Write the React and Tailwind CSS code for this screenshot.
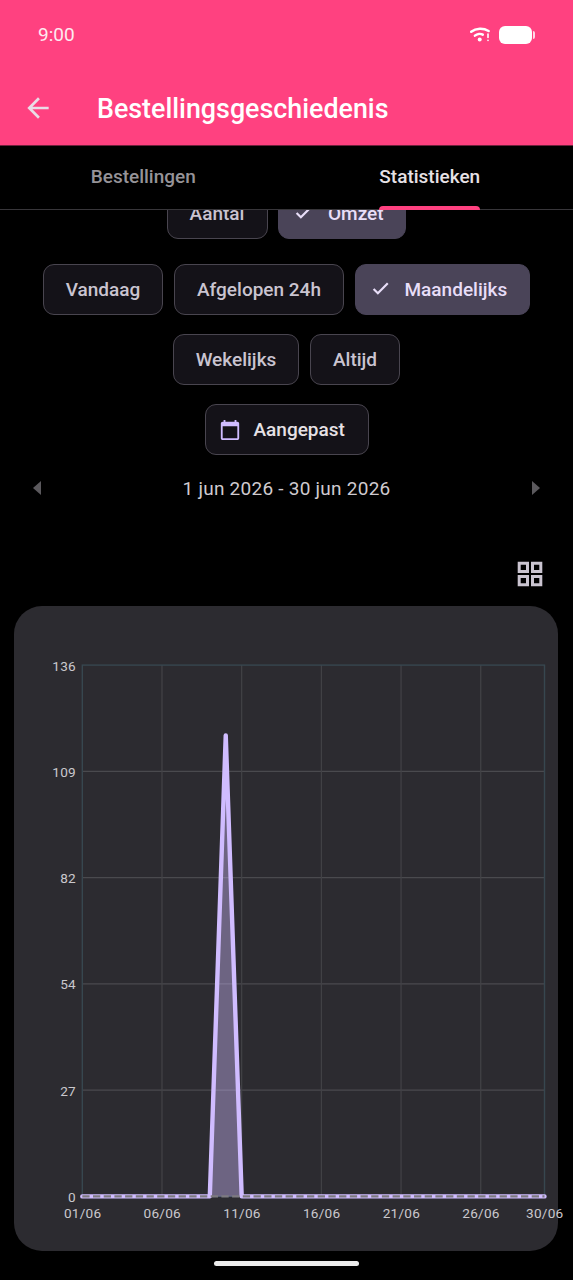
import clsx from "clsx";

function Chip({ label, selected, icon, className = "" }) {
  return (
    <div
      className={clsx(
        "flex h-[51px] shrink-0 items-center rounded-[11px] border text-[19px] font-medium",
        selected
          ? "border-[#4a4458] bg-[#4a4458] text-[#e8def8]"
          : "border-[#49454f] bg-[#141218] text-[#cac4d0]",
        className
      )}
    >
      {icon}
      <span className="pt-[2px] whitespace-nowrap">{label}</span>
    </div>
  );
}

function CheckMark() {
  return (
    <svg viewBox="0 0 24 24" className="mr-[14px] mb-[2px] size-[21px] shrink-0" fill="none" stroke="#e8def8" strokeWidth="2.5">
      <path d="M4.1 12.500 9 17.400 20.300 6.100" />
    </svg>
  );
}

const left = 68.3;
const right = 530.5;
const top = 59.1;
const bottom = 590.4;
const dayX = (day) => left + ((right - left) / 29) * (day - 1);

const yTicks = [136, 109, 82, 54, 27, 0].map((label, i) => ({
  label,
  y: top + ((bottom - top) / 5) * i,
}));
const xTicks = [1, 6, 11, 16, 21, 26, 30];
const amounts = Array.from({ length: 30 }, (_, i) => (i === 9 ? 118 : 0));
const line = amounts
  .map((a, i) => `${i ? "L" : "M"}${dayX(i + 1)} ${bottom - (a / 136) * (bottom - top)}`)
  .join(" ");

function RevenueChart() {
  return (
    <svg viewBox="0 0 544 645" className="h-[645px] w-[544px] overflow-visible">
      {yTicks.slice(1, 5).map((t) => (
        <line key={t.label} x1={left} x2={right} y1={t.y} y2={t.y} stroke="#4a4a4e" strokeWidth="1.2" />
      ))}
      {xTicks.slice(1, 6).map((d) => (
        <line key={d} x1={dayX(d)} x2={dayX(d)} y1={top} y2={bottom} stroke="#434347" strokeWidth="1.2" />
      ))}
      <rect x={left} y={top} width={right - left} height={bottom - top} fill="none" stroke="#37474f" strokeWidth="1.4" />
      <path d={`${line} Z`} fill="#d0bcff" fillOpacity="0.4" />
      <path d={line} fill="none" stroke="#d0bcff" strokeWidth="4.4" strokeLinecap="round" strokeLinejoin="round" />
      <line x1={left} x2={right} y1={bottom} y2={bottom} stroke="#7d7a80" strokeWidth="2.4" strokeDasharray="7.3 3.4" />
      <g fill="#cac8cd" fontSize="13.6" letterSpacing="0.25">
        {yTicks.map((t) => (
          <text key={t.label} x="62" y={t.y + 5.6} textAnchor="end">
            {t.label}
          </text>
        ))}
        {xTicks.map((d) => (
          <text key={d} x={dayX(d) + 0.3} y="612" textAnchor="middle">
            {`${String(d).padStart(2, "0")}/06`}
          </text>
        ))}
      </g>
    </svg>
  );
}

function StatusBar() {
  return (
    <div className="flex h-[70px] items-center justify-between pr-[38px] pl-[38px]">
      <span className="pt-px text-[19px] text-[#fdeaf0]">9:00</span>
      <div className="flex items-center gap-[9px]">
        <svg viewBox="0 0 20 16" className="h-4 w-5" fill="none" stroke="#fff" strokeLinecap="round">
          <path d="M1.2 4.800C6 1 13.500 1 18.600 4" strokeWidth="2.500" />
          <path d="M4.900 8.600C7.200 6.700 10.800 6.400 12.800 7.600" strokeWidth="2.500" />
          <circle cx="9.700" cy="12.400" r="2" fill="#fff" stroke="none" />
          <path d="M18 7v3.500M18 13.300v.2" strokeWidth="1.600" />
        </svg>
        <div className="flex items-center gap-px">
          <div className="h-[18px] w-[33px] rounded-[6px] bg-white" />
          <div className="h-2 w-[2px] rounded-r-sm bg-white/80" />
        </div>
      </div>
    </div>
  );
}

export default function App() {
  return (
    <div className="flex h-[1280px] w-[573px] flex-col overflow-hidden bg-black font-['Roboto',sans-serif]">
      <header className="h-[145px] shrink-0 bg-[#ff4180]">
        <StatusBar />
        <div className="flex h-[75px] items-center pl-[22px]">
          <svg viewBox="0 0 24 24" className="size-[32px]" fill="#eadce6">
            <path d="M20 11H7.830l5.590-5.590L12 4l-8 8 8 8 1.410-1.410L7.830 13H20z" />
          </svg>
          <h1 className="ml-[43px] pt-[4px] text-[26.830px] font-medium text-white">Bestellingsgeschiedenis</h1>
        </div>
      </header>

      <nav className="grid h-[65px] shrink-0 grid-cols-2 border-t border-b border-t-[#70203c] border-b-[#38363a] text-[19px] font-medium">
        <div className="flex items-center justify-center text-[#969398]">Bestellingen</div>
        <div className="flex justify-center">
          <div className="relative flex items-center text-[#e6e1e5]">
            Statistieken
            <div className="absolute inset-x-0 -bottom-px h-1 rounded-t bg-[#ff4180]" />
          </div>
        </div>
      </nav>

      <main className="flex min-h-0 flex-1 flex-col overflow-hidden">
        <div className="-mt-[22px] flex shrink-0 justify-center gap-[10.500px] pr-[0.500px]">
          <Chip label="Aantal" className="w-[101px] justify-center" />
          <Chip label="Omzet" selected className="w-[128px] pl-[14px]" icon={<CheckMark />} />
        </div>
        <div className="mt-[25px] flex shrink-0 flex-wrap justify-center gap-x-[11px] gap-y-[19px]">
          <Chip label="Vandaag" className="w-[120px] justify-center" />
          <Chip label="Afgelopen 24h" className="w-[170px] justify-center" />
          <Chip label="Maandelijks" selected className="w-[175px] pl-[13.500px]" icon={<CheckMark />} />
          <Chip label="Wekelijks" className="w-[126px] justify-center" />
          <Chip label="Altijd" className="w-[90px] justify-center" />
        </div>
        <div className="mt-[19px] flex shrink-0 justify-center">
          <Chip
            label={<span className="text-[#e6e1e5]">Aangepast</span>}
            className="w-[164px] pl-[13px]"
            icon={
              <svg viewBox="0 0 24 24" className="mr-[13px] size-[22px]" fill="#d0bcff">
                <path d="M20 3h-1V1h-2v2H7V1H5v2H4c-1.100 0-2 .9-2 2v16c0 1.100.9 2 2 2h16c1.100 0 2-.9 2-2V5c0-1.100-.9-2-2-2m0 18H4V8h16z" />
              </svg>
            }
          />
        </div>
        <div className="mt-[13px] flex h-10 shrink-0 items-center justify-between pr-[33px] pl-[33px]">
          <svg viewBox="0 0 8 14" className="h-[14px] w-2" fill="#5b595d">
            <path d="M8 0v14L0 7z" />
          </svg>
          <span className="pt-[2px] text-[19px] tracking-[0.25px] text-[#cfcacf]">1 jun 2026 - 30 jun 2026</span>
          <svg viewBox="0 0 8 14" className="h-[14px] w-2" fill="#5b595d">
            <path d="M0 0v14l8-7z" />
          </svg>
        </div>
        <div className="mt-[53px] flex shrink-0 justify-end pr-[30px]">
          <svg viewBox="0 0 26 26" className="size-[26px]" fill="none" stroke="#cac4d0" strokeWidth="3">
            <path d="M2.200 2.200h8.300v8.300h-8.300zM15.500 2.200h8.300v8.300h-8.300zM2.200 15.500h8.300v8.300h-8.300zM15.500 15.500h8.300v8.300h-8.300z" />
          </svg>
        </div>
        <section className="mt-[19px] ml-[14.400px] h-[645px] w-[544px] shrink-0 rounded-[28px] bg-[#2c2b30]">
          <RevenueChart />
        </section>
        <div className="mx-auto mt-[10px] h-[5px] w-[145px] shrink-0 rounded-full bg-[#ececec]" />
      </main>
    </div>
  );
}
